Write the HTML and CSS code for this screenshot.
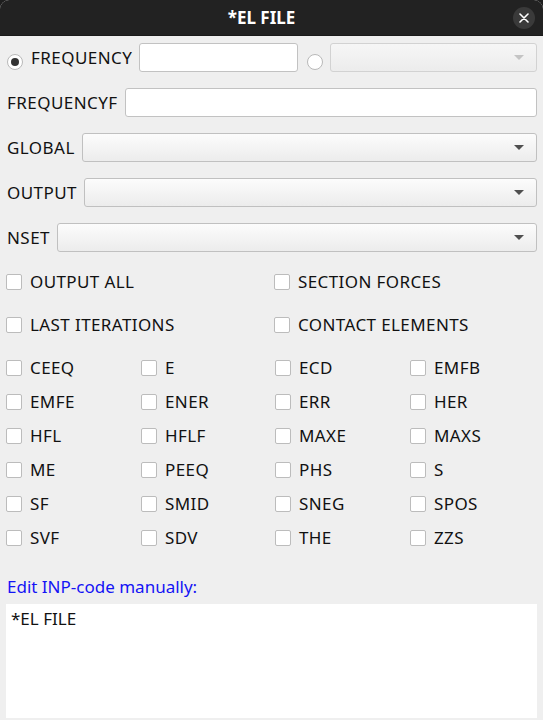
FILE: index.html
```html
<!DOCTYPE html>
<html>
<head>
<meta charset="utf-8">
<link rel="stylesheet" href="styles.css">
</head>
<body>
<div class="window">
  <header class="titlebar">
    <span class="title">*EL FILE</span>
    <span class="close">
      <svg width="10" height="10" viewBox="0 0 10 10"><path d="M1 1L9 9M9 1L1 9" stroke="#fff" stroke-width="1.6" stroke-linecap="round"/></svg>
    </span>
  </header>
  <main class="content">
    <div class="row">
      <span class="radio checked"></span>
      <span class="lbl">FREQUENCY</span>
      <span class="entry freq"></span>
      <span class="radio second"></span>
      <span class="combo disabled grow"><span class="arrow"></span></span>
    </div>
    <div class="row">
      <span class="lbl">FREQUENCYF</span>
      <span class="entry grow"></span>
    </div>
    <div class="row">
      <span class="lbl">GLOBAL</span>
      <span class="combo grow"><span class="arrow"></span></span>
    </div>
    <div class="row">
      <span class="lbl">OUTPUT</span>
      <span class="combo grow"><span class="arrow"></span></span>
    </div>
    <div class="row">
      <span class="lbl">NSET</span>
      <span class="combo grow"><span class="arrow"></span></span>
    </div>

    <div class="checks two">
      <label class="check"><span class="box"></span>OUTPUT ALL</label>
      <label class="check"><span class="box"></span>SECTION FORCES</label>
      <label class="check"><span class="box"></span>LAST ITERATIONS</label>
      <label class="check"><span class="box"></span>CONTACT ELEMENTS</label>
    </div>

    <div class="checks four">
      <label class="check"><span class="box"></span>CEEQ</label>
      <label class="check"><span class="box"></span>E</label>
      <label class="check"><span class="box"></span>ECD</label>
      <label class="check"><span class="box"></span>EMFB</label>
      <label class="check"><span class="box"></span>EMFE</label>
      <label class="check"><span class="box"></span>ENER</label>
      <label class="check"><span class="box"></span>ERR</label>
      <label class="check"><span class="box"></span>HER</label>
      <label class="check"><span class="box"></span>HFL</label>
      <label class="check"><span class="box"></span>HFLF</label>
      <label class="check"><span class="box"></span>MAXE</label>
      <label class="check"><span class="box"></span>MAXS</label>
      <label class="check"><span class="box"></span>ME</label>
      <label class="check"><span class="box"></span>PEEQ</label>
      <label class="check"><span class="box"></span>PHS</label>
      <label class="check"><span class="box"></span>S</label>
      <label class="check"><span class="box"></span>SF</label>
      <label class="check"><span class="box"></span>SMID</label>
      <label class="check"><span class="box"></span>SNEG</label>
      <label class="check"><span class="box"></span>SPOS</label>
      <label class="check"><span class="box"></span>SVF</label>
      <label class="check"><span class="box"></span>SDV</label>
      <label class="check"><span class="box"></span>THE</label>
      <label class="check"><span class="box"></span>ZZS</label>
    </div>

    <div class="manual">Edit INP-code manually:</div>
    <div class="code">*EL FILE</div>
  </main>
</div>
</body>
</html>
```

FILE: styles.css
```css
* { box-sizing: border-box; }
html, body {
  margin: 0;
  padding: 0;
  background: #1e1e1e;
}
body {
  width: 543px;
  height: 720px;
  font-family: "Noto Sans", "DejaVu Sans", sans-serif;
  font-size: 17px;
  color: #111;
}
.window {
  width: 543px;
  height: 720px;
  background: #efefef;
  border-radius: 9px 9px 0 0;
  overflow: hidden;
}
.titlebar {
  height: 36px;
  background: #222222;
  display: flex;
  align-items: center;
  justify-content: center;
  position: relative;
  border-bottom: 1px solid #1a1a1a;
  padding-right: 20px;
}
.title {
  color: #fff;
  font-weight: bold;
  font-size: 17px;
}
.close {
  position: absolute;
  right: 8px;
  top: 7px;
  width: 22px;
  height: 22px;
  border-radius: 50%;
  background: #3a3a3a;
  display: flex;
  align-items: center;
  justify-content: center;
}
.content {
  padding: 7px 6px 0 6px;
  display: flex;
  flex-direction: column;
}
.row {
  display: flex;
  align-items: center;
  height: 29px;
  margin-bottom: 16px;
  line-height: 20px;
}
.lbl {
  padding-left: 1px;
  margin-right: 7px;
  white-space: nowrap;
  letter-spacing: 0.45px;
}
.grow { flex: 1; }
.entry {
  height: 29px;
  background: #fff;
  border: 1px solid #c2c2c2;
  border-radius: 3px;
}
.entry.freq { width: 159px; flex: none; }
.combo {
  height: 29px;
  border: 1px solid #c0c0c0;
  border-radius: 3px;
  background: linear-gradient(#fcfcfc, #ececec);
  position: relative;
}
.combo .arrow {
  position: absolute;
  right: 12px;
  top: 11px;
  width: 0;
  height: 0;
  border-left: 5px solid transparent;
  border-right: 5px solid transparent;
  border-top: 5px solid #505050;
}
.combo.disabled {
  border-color: #d2d2d2;
  background: linear-gradient(#f6f6f6, #ececec);
}
.combo.disabled .arrow { border-top-color: #c4c4c4; }
.radio {
  width: 16px;
  height: 16px;
  border-radius: 50%;
  border: 1px solid #b9b9b9;
  background: #fff;
  margin: 8px 7px 0 1px;
  position: relative;
  flex: none;
}
.radio.checked::after {
  content: "";
  position: absolute;
  left: 3px;
  top: 3px;
  width: 8px;
  height: 8px;
  border-radius: 50%;
  background: #333;
}
.radio.second { margin-left: 9px; margin-right: 7px; }
.checks {
  display: grid;
  align-items: center;
  line-height: 20px;
}
.checks.two {
  margin-top: 4px;
  grid-template-columns: 268px 1fr;
  grid-auto-rows: 20px;
  row-gap: 23px;
}
.checks.four {
  margin-top: 23px;
  grid-template-columns: 135px 134px 135px 1fr;
  grid-auto-rows: 20px;
  row-gap: 14px;
}
.check {
  display: flex;
  align-items: center;
  white-space: nowrap;
  letter-spacing: 0.4px;
}
.box {
  width: 16px;
  height: 16px;
  border: 1px solid #bcbcbc;
  border-radius: 2px;
  background: #fff;
  margin-right: 8px;
  flex: none;
}
.manual {
  margin-top: 29px;
  height: 20px;
  line-height: 20px;
  color: #1414f5;
  padding-left: 1px;
}
.code {
  margin-top: 7px;
  height: 114px;
  background: #fff;
  padding: 4px 5px;
  line-height: 22px;
}
```
